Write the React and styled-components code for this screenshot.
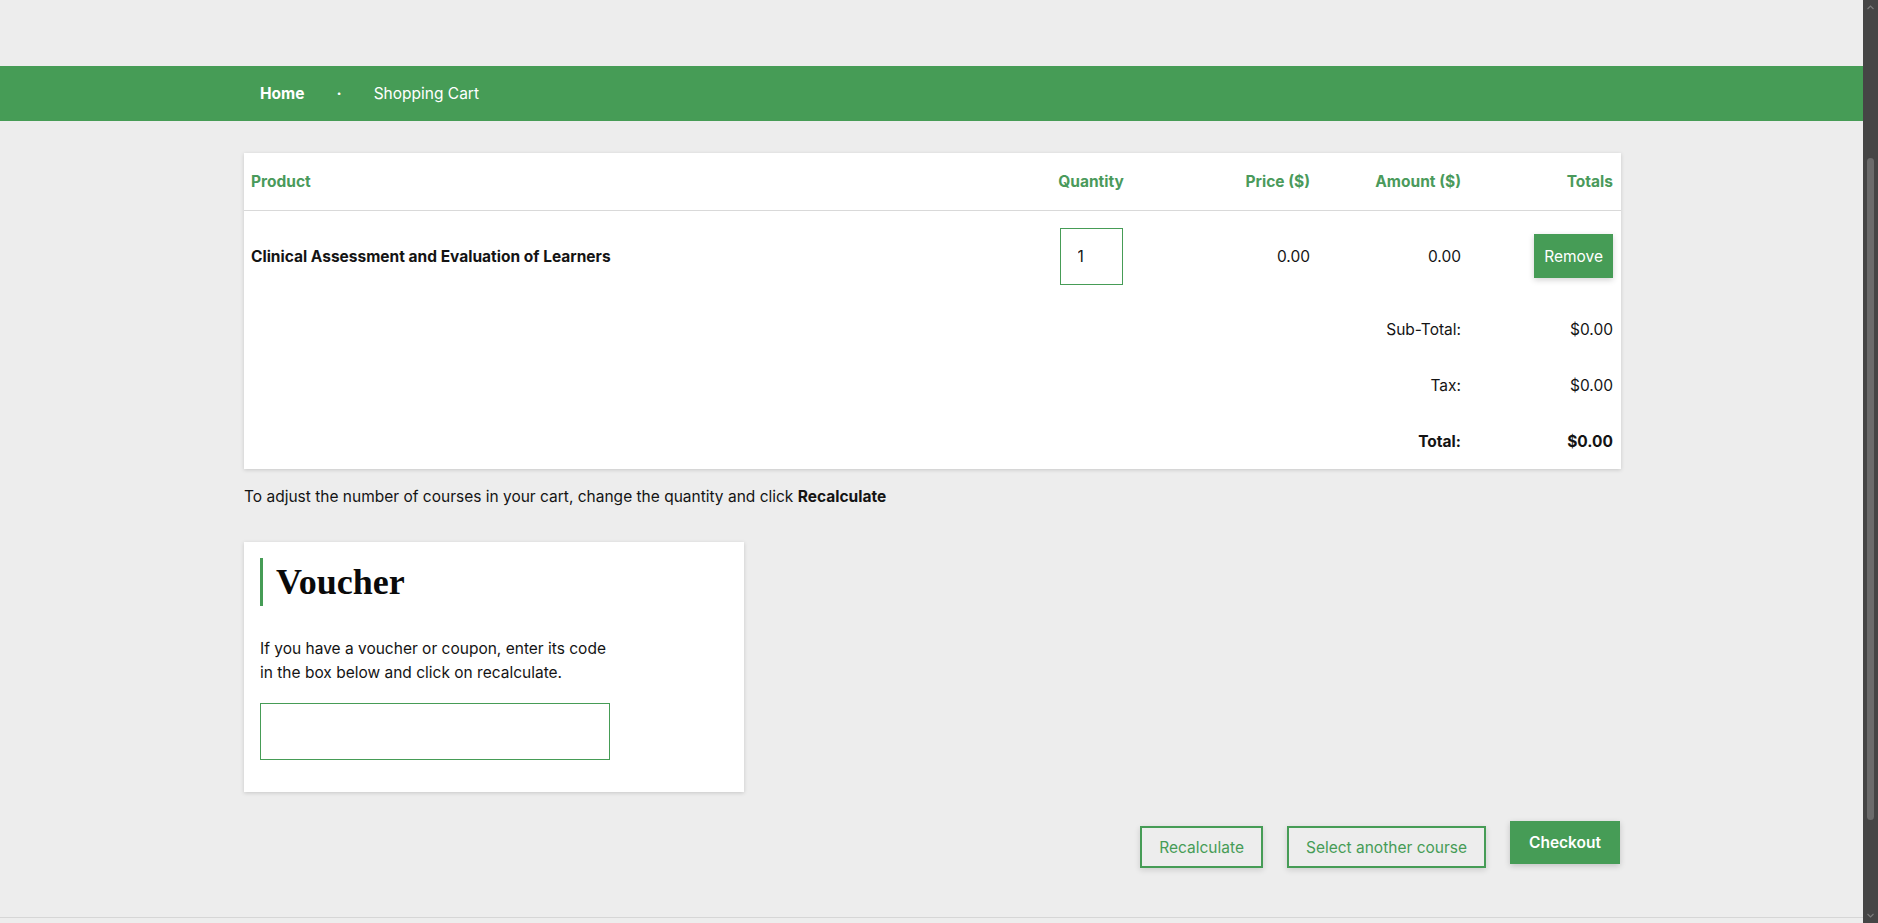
import styled, { createGlobalStyle } from 'styled-components';

const green = '#469c56';

const GlobalStyle = createGlobalStyle`
  html, body {
    margin: 0;
    padding: 0;
    background: #ededed;
    overflow: hidden;
  }
  body {
    font-family: Inter, 'Noto Sans', 'Liberation Sans', sans-serif;
    font-size: 15.5px;
    color: #141414;
  }
`;

const Page = styled.div`
  display: flex;
  height: 923px;
  overflow: hidden;
`;

const Main = styled.div`
  flex: 1;
  padding-top: 66px;
  display: flex;
  flex-direction: column;
`;

const NavBar = styled.nav`
  height: 55px;
  background: ${green};
  display: flex;
  justify-content: center;
  padding-left: 2px;
`;

const Container = styled.div`
  width: 1377px;
`;

const Crumbs = styled.ul`
  list-style: none;
  margin: 0;
  height: 100%;
  padding: 0 0 0 16px;
  display: flex;
  align-items: center;
  gap: 32px;
  color: #fff;
`;

const Crumb = styled.li`
  font-weight: ${(p) => (p.$strong ? 700 : 400)};
`;

const Dot = styled.li`
  font-weight: 700;
`;

const Body = styled.div`
  display: flex;
  justify-content: center;
  padding: 32px 0 0 2px;
`;

const Card = styled.div`
  background: #fff;
  box-shadow: 0 1px 4px rgba(0, 0, 0, 0.16);
`;

const Row = styled.div`
  display: grid;
  grid-template-columns: 1fr 120px 159px 151px 152px;
  align-items: center;
  padding: 0 8px 0 7px;
  height: ${(p) => p.$h}px;
  border-bottom: ${(p) => (p.$line ? '1px solid #d9d9d9' : 'none')};
`;

const Head = styled.div`
  color: #4a9a5b;
  font-weight: 700;
  text-align: ${(p) => p.$align || 'left'};
`;

const Cell = styled.div`
  text-align: ${(p) => p.$align || 'left'};
  font-weight: ${(p) => (p.$bold ? 700 : 400)};
  grid-column: ${(p) => p.$span || 'auto'};
`;

const QtyCell = styled.div`
  display: flex;
  justify-content: center;
`;

const QtyInput = styled.input`
  width: 63px;
  height: 57px;
  box-sizing: border-box;
  border: 1px solid ${green};
  padding: 0 0 0 17px;
  font: inherit;
  color: #141414;
  outline: none;
`;

const SolidButton = styled.button`
  background: ${green};
  color: #fff;
  border: none;
  font-family: inherit;
  font-size: 15.5px;
  font-weight: ${(p) => (p.$bold ? 600 : 400)};
  height: ${(p) => p.$h}px;
  padding: 0 ${(p) => p.$px}px;
  box-shadow: 0 2px 6px rgba(0, 0, 0, 0.18);
  cursor: pointer;
`;

const ActionCell = styled.div`
  display: flex;
  justify-content: flex-end;
`;

const Note = styled.p`
  margin: 16px 0 0;
  line-height: 24px;
`;

const VoucherCard = styled(Card)`
  width: 500px;
  box-sizing: border-box;
  margin-top: 33px;
  padding: 16px 16px 32px;
`;

const VoucherTitle = styled.h2`
  margin: 0;
  border-left: 3px solid ${green};
  padding-left: 13px;
  height: 48px;
  line-height: 48px;
  font-family: 'Liberation Serif', 'DejaVu Serif', serif;
  font-size: 36px;
  font-weight: 700;
  color: #0a0a0a;
`;

const VoucherText = styled.p`
  margin: 31px 0 0;
  line-height: 24px;
`;

const VoucherInput = styled.input`
  display: block;
  margin-top: 18px;
  width: 350px;
  height: 57px;
  box-sizing: border-box;
  border: 1px solid ${green};
  outline: none;
  background: #fff;
`;

const Actions = styled.div`
  display: flex;
  justify-content: flex-end;
  align-items: flex-start;
  gap: 24px;
  margin-top: 29px;
  padding-right: 1px;
`;

const OutlineButton = styled.button`
  margin-top: 5px;
  height: 42px;
  padding: 0 17px;
  background: transparent;
  border: 2px solid ${green};
  color: ${green};
  font-family: inherit;
  font-size: 15.5px;
  box-shadow: 0 2px 6px rgba(0, 0, 0, 0.14);
  cursor: pointer;
`;

const Footer = styled.div`
  margin-top: 49px;
  border-top: 1px solid #d6d6d6;
  flex: 1;
`;

const Rail = styled.div`
  width: 15px;
  background: #454545;
  display: flex;
  flex-direction: column;
  align-items: center;
`;

const Arrow = styled.svg`
  width: 9px;
  height: 15px;
  display: block;
`;

const Thumb = styled.div`
  margin-top: 143px;
  width: 7px;
  height: 662px;
  border-radius: 4px;
  background: #6b6b6b;
`;

const BottomArrow = styled(Arrow)`
  margin-top: auto;
`;

export default function App() {
  return (
    <Page>
      <GlobalStyle />
      <Main>
        <NavBar>
          <Container>
            <Crumbs>
              <Crumb $strong>Home</Crumb>
              <Dot>·</Dot>
              <Crumb>Shopping Cart</Crumb>
            </Crumbs>
          </Container>
        </NavBar>

        <Body>
          <Container>
            <Card>
              <Row $h={57} $line>
                <Head>Product</Head>
                <Head $align="center">Quantity</Head>
                <Head $align="right">Price ($)</Head>
                <Head $align="right">Amount ($)</Head>
                <Head $align="right">Totals</Head>
              </Row>
              <Row $h={90}>
                <Cell $bold>Clinical Assessment and Evaluation of Learners</Cell>
                <QtyCell>
                  <QtyInput defaultValue="1" />
                </QtyCell>
                <Cell $align="right">0.00</Cell>
                <Cell $align="right">0.00</Cell>
                <ActionCell>
                  <SolidButton $h={44} $px={10}>Remove</SolidButton>
                </ActionCell>
              </Row>
              <Row $h={56}>
                <Cell $span="1 / 5" $align="right">Sub-Total:</Cell>
                <Cell $align="right">$0.00</Cell>
              </Row>
              <Row $h={56}>
                <Cell $span="1 / 5" $align="right">Tax:</Cell>
                <Cell $align="right">$0.00</Cell>
              </Row>
              <Row $h={56}>
                <Cell $span="1 / 5" $align="right" $bold>Total:</Cell>
                <Cell $align="right" $bold>$0.00</Cell>
              </Row>
            </Card>

            <Note>
              To adjust the number of courses in your cart, change the quantity and click{' '}
              <b>Recalculate</b>
            </Note>

            <VoucherCard>
              <VoucherTitle>Voucher</VoucherTitle>
              <VoucherText>
                If you have a voucher or coupon, enter its code
                <br />
                in the box below and click on recalculate.
              </VoucherText>
              <VoucherInput />
            </VoucherCard>

            <Actions>
              <OutlineButton>Recalculate</OutlineButton>
              <OutlineButton>Select another course</OutlineButton>
              <SolidButton $h={43} $px={19} $bold>Checkout</SolidButton>
            </Actions>
          </Container>
        </Body>

        <Footer />
      </Main>

      <Rail>
        <Arrow viewBox="0 0 9 15">
          <path d="M1.5 9 L4.5 6 L7.5 9" fill="none" stroke="#7a7a7a" strokeWidth="1.2" />
        </Arrow>
        <Thumb />
        <BottomArrow viewBox="0 0 9 15">
          <path d="M1.5 6 L4.5 9 L7.5 6" fill="none" stroke="#7a7a7a" strokeWidth="1.2" />
        </BottomArrow>
      </Rail>
    </Page>
  );
}
